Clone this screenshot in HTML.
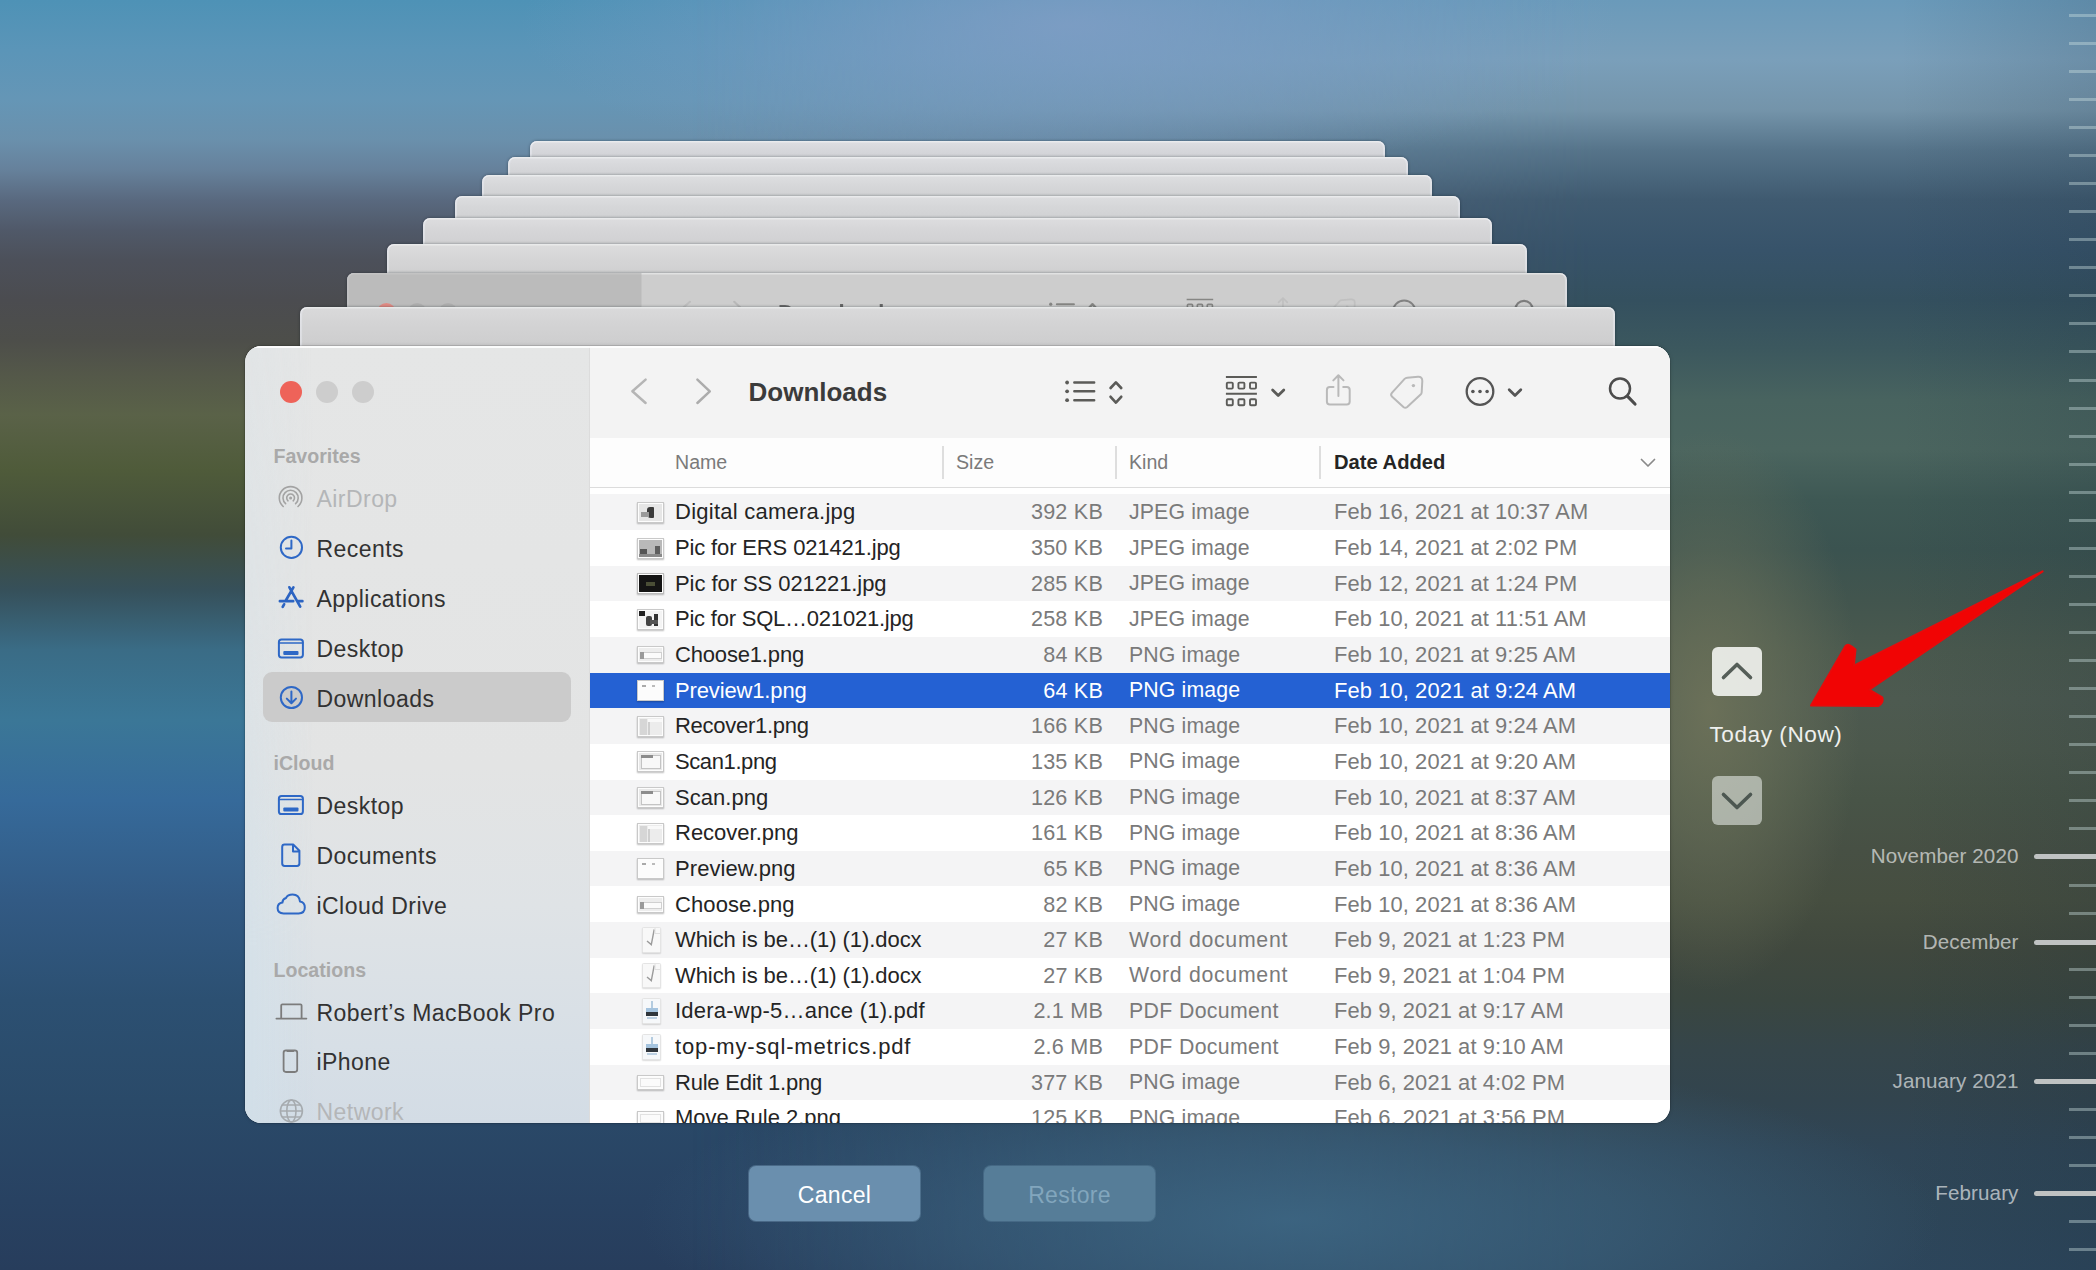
<!DOCTYPE html>
<html>
<head>
<meta charset="utf-8">
<title>Time Machine</title>
<style>
*{box-sizing:border-box;margin:0;padding:0}
html,body{width:2096px;height:1270px;overflow:hidden;background:#2b4a68}
body{font-family:"Liberation Sans",sans-serif;position:relative;color:#262626}
.abs{position:absolute}
/* ---------- background ---------- */
#bg{position:absolute;left:0;top:0;width:2096px;height:1270px;overflow:hidden}
#bgL{position:absolute;inset:0;background:linear-gradient(to bottom,
 #4e92b6 0px,#5b95b8 50px,#6596b6 100px,#6a90ac 140px,#66819b 170px,#59697f 200px,#505969 230px,#4c505a 260px,#4b4c50 300px,
 #4d4e4a 340px,#545849 375px,#5a6248 415px,#4f5b3a 470px,#414c39 535px,#36505a 590px,#3a6c86 650px,#3b7797 720px,
 #366a9a 800px,#325a84 900px,#2c5072 1000px,#2a4a69 1100px,#284262 1200px,#273d5c 1270px)}
#bgR{position:absolute;inset:0;background:linear-gradient(to bottom,
 #6a9aba 0px,#7a9fba 60px,#7494aa 110px,#56748a 150px,#3f5a70 200px,#37536a 250px,#34505f 300px,#3c585e 350px,
 #48635f 400px,#4b655f 450px,#3e5854 500px,#3b5350 550px,#42554e 600px,#4a594e 650px,#4d5a50 700px,#4c584c 750px,
 #485447 800px,#475044 850px,#464e40 900px,#40483e 950px,#3a4640 1000px,#35454a 1050px,#32444e 1100px,#2f4556 1150px,
 #2e4658 1200px,#2d465c 1270px);
 -webkit-mask-image:linear-gradient(to right,transparent 33%,#000 76%);mask-image:linear-gradient(to right,transparent 33%,#000 76%)}
#bgTop{position:absolute;left:520px;top:-130px;width:1100px;height:310px;border-radius:50%;
 background:radial-gradient(closest-side,rgba(130,158,198,.8),rgba(130,158,198,0))}
#bgOl{position:absolute;left:1560px;top:430px;width:300px;height:560px;border-radius:50%;
 background:radial-gradient(closest-side,rgba(112,116,90,.85),rgba(108,114,90,.55) 45%,rgba(100,108,88,0))}
#bgBt{position:absolute;left:640px;top:1050px;width:1300px;height:340px;border-radius:50%;
 background:radial-gradient(closest-side,rgba(64,108,138,.78),rgba(62,104,134,.5) 50%,rgba(60,100,130,0))}
#bgFR{position:absolute;left:1900px;top:0;width:196px;height:1270px;
 background:linear-gradient(to right,rgba(20,40,55,0),rgba(20,40,55,.14))}
/* ---------- stack ---------- */
.ly{position:absolute;border-radius:7px 7px 0 0;background:#d2d3d5;box-shadow:inset 0 1.5px 0 rgba(255,255,255,.4),inset -2px 0 1px rgba(235,238,245,.5),inset 2px 0 1px rgba(235,238,245,.5),0 0 3px rgba(10,20,30,.45)}
/* ---------- window ---------- */
#win{position:absolute;left:245px;top:346px;width:1425px;height:777px;border-radius:16.5px;overflow:hidden;background:#fff;
 box-shadow:0 0 0 1px rgba(0,0,0,.10),0 0 4px rgba(0,0,0,.18)}
#side{position:absolute;left:0;top:0;width:344px;height:777px;
 background:linear-gradient(to bottom,#e5e6e6 0,#e3e4e4 420px,#dfe3e6 560px,#d7dfe6 700px,#d3dce5 777px)}
#sideEdge{position:absolute;left:0;top:0;width:70px;height:777px;background:linear-gradient(to right,rgba(208,224,234,.6),rgba(208,224,234,0));-webkit-mask-image:linear-gradient(to bottom,rgba(0,0,0,.25) 0,rgba(0,0,0,.5) 300px,#000 600px);mask-image:linear-gradient(to bottom,rgba(0,0,0,.25) 0,rgba(0,0,0,.5) 300px,#000 600px)}
#main{position:absolute;left:344px;top:0;width:1081px;height:777px;background:#fff;border-left:1px solid #dcdcdc}
#tb{position:absolute;left:0;top:0;width:1081px;height:93px;background:#f3f3f3;border-bottom:1px solid #dedede}
#hdr{position:absolute;left:0;top:92px;width:1081px;height:50px;background:#fdfdfd;border-bottom:1.5px solid #dcdcdc}

/* ---------- rows ---------- */
.row{position:absolute;left:0;width:1080px;height:35.65px;font-size:22px;line-height:35.65px;white-space:nowrap}
.row.g{background:#f4f4f5}
.row.sel{background:#2461d3;color:#fff}
.row .n{position:absolute;left:85px;top:0;letter-spacing:.2px;color:#242424}
.row .s{position:absolute;right:567px;top:0;color:#7a7a7a;font-size:21.6px;letter-spacing:.2px}
.row .k{position:absolute;left:539px;top:.6px;color:#7a7a7a;font-size:21.3px;letter-spacing:.12px}
.row .d{position:absolute;left:744px;top:0;color:#7a7a7a;font-size:21.9px;letter-spacing:.1px}
.row.sel .n,.row.sel .s,.row.sel .k,.row.sel .d{color:#fff}
.ic{position:absolute;left:47px;top:7.5px;width:27px;height:21px;border:1px solid #c9c9c9;background:#f2f2f2;box-shadow:0 1px 1.5px rgba(0,0,0,.25);overflow:hidden}
.ic i{position:absolute;display:block}
.ic:after{content:"";position:absolute;inset:0;border:1.6px solid #fdfdfd}
.ic.doc:after{display:none}
.ic.w{top:9.5px;height:17px}
.ic.t{top:10.5px;height:15px}
.ic.doc{left:51.5px;top:5px;width:19.5px;height:25.5px;border:1px solid #e4e4e4;border-radius:1.5px;background:#f8f8f8;box-shadow:0 1px 1.5px rgba(0,0,0,.14)}
/* header */
#hdr span{position:absolute;top:0;line-height:48px;font-size:19.6px;color:#7a7a7a;white-space:nowrap}
#hdr b{position:absolute;top:0;line-height:48px;font-size:20.2px;color:#242424;white-space:nowrap}
#hdr i{position:absolute;top:8px;width:1.5px;height:33px;background:#dedede}

/* ---------- toolbar ---------- */
#tb svg{position:absolute;left:0;top:0}
#ttl{position:absolute;left:158.5px;top:25px;line-height:42px;font-size:26px;font-weight:bold;color:#3b3b3b;white-space:nowrap}
/* ---------- sidebar ---------- */
.tl{position:absolute;top:35px;width:22px;height:22px;border-radius:50%}
.sh{position:absolute;left:28.5px;font-size:19.6px;font-weight:bold;color:#a9a9a9;line-height:24px;white-space:nowrap}
.si{position:absolute;left:71.5px;margin-top:1px;font-size:23px;letter-spacing:.45px;color:#323232;line-height:30px;white-space:nowrap}
.si.dim{color:#b4b6b8}
#pill{position:absolute;left:17.5px;top:326px;width:308.5px;height:49.5px;border-radius:9px;background:#cbcbcb}
#side svg{position:absolute;left:0;top:0}

/* ---------- right side ---------- */
.nb{position:absolute;left:1712px;width:50px;height:49px;border-radius:6px}
#today{position:absolute;left:1709.5px;top:719.5px;font-size:22.6px;letter-spacing:.55px;line-height:30px;color:#eef0ee;white-space:nowrap}
.tk{position:absolute;left:2069px;width:27px;height:3px;background:rgba(205,225,225,.4)}
.mk{position:absolute;left:2033.5px;width:62.5px;height:5px;background:#bfc2c2;border-radius:2.5px 0 0 2.5px}
.ml{position:absolute;right:77.5px;margin-top:.5px;font-size:20.6px;line-height:26px;color:rgba(255,255,255,.62);white-space:nowrap;letter-spacing:.1px}
/* ---------- buttons ---------- */
.btn{position:absolute;top:1166px;width:171px;height:55px;border-radius:7px;text-align:center;line-height:58px;font-size:23px;white-space:nowrap;letter-spacing:.3px}
</style>
</head>
<body>
<div id="bg">
  <div id="bgL"></div>
  <div id="bgR"></div>
  <div id="bgTop"></div>
  <div id="bgOl"></div>
  <div id="bgBt"></div>
  <div id="bgFR"></div>
</div>
<div class="ly" style="background:linear-gradient(to bottom,#dedfe3 0,#d7d8dc 7.2px,#d1d2d6 16.0px);left:530px;top:141px;width:855px;height:28px"></div>
<div class="ly" style="background:linear-gradient(to bottom,#dedfe2 0,#d7d8db 8.1px,#d1d2d5 18.0px);left:508px;top:157px;width:900px;height:30px"></div>
<div class="ly" style="background:linear-gradient(to bottom,#dedfe1 0,#d7d8da 9.2px,#d1d2d4 20.5px);left:482px;top:175px;width:950px;height:32.5px"></div>
<div class="ly" style="background:linear-gradient(to bottom,#dddee0 0,#d6d7d9 10.1px,#d0d1d3 22.5px);left:455px;top:195.5px;width:1005px;height:34.5px"></div>
<div class="ly" style="background:linear-gradient(to bottom,#dddddf 0,#d6d6d8 11.7px,#d0d0d2 26.0px);left:423px;top:218px;width:1069px;height:38px"></div>
<div class="ly" style="background:linear-gradient(to bottom,#ddddde 0,#d6d6d7 13.1px,#d0d0d1 29.0px);left:387px;top:244px;width:1140px;height:41px"></div>
<div class="ly" id="ly7" style="overflow:hidden;background:#cdcdcd;left:347px;top:273px;width:1220px;height:45.5px"><div style="position:absolute;left:0;top:0;width:1425px;height:60px;transform:scale(.856);transform-origin:0 0;opacity:.62">
<div style="position:absolute;left:0;top:0;width:344px;height:60px;background:#b0b0b0"></div>
<div class="tl" style="left:35px;background:#ee6359"></div><div class="tl" style="left:70.5px;background:#9c9c9c"></div><div class="tl" style="left:106.5px;background:#9c9c9c"></div>
<svg style="position:absolute;left:345px;top:0" width="1080" height="92" viewBox="590 346 1080 92" fill="none" stroke-linecap="round" stroke-linejoin="round"><use href="#tbg"/></svg>
<div style="position:absolute;left:503.5px;top:25px;line-height:42px;font-size:26px;font-weight:bold;color:#2b2b2b;white-space:nowrap">Downloads</div>
</div></div>
<div class="ly" style="background:linear-gradient(to bottom,#dadadb 0,#d3d3d4 17.8px,#cdcdce 39.5px);left:300px;top:306.5px;width:1315px;height:51.5px"></div>
<!--STACK-->
<div id="win"><div style="position:absolute;left:0;top:0;width:1425px;height:2px;background:rgba(255,255,255,.85);z-index:5"></div>
  <div id="side"><div id="sideEdge"></div>
<div class="tl" style="left:35px;background:#ee6359"></div><div class="tl" style="left:70.5px;background:#cdcdcd"></div><div class="tl" style="left:106.5px;background:#cdcdcd"></div>
<div id="pill"></div>
<svg width="344" height="777" viewBox="245 346 344 777" fill="none" stroke-linecap="round" stroke-linejoin="round">
<!-- airdrop -->
<g stroke="#a3a3a3" stroke-width="1.6">
 <path d="M283.2 506.5 A11.3 11.3 0 1 1 298 506.5"/>
 <path d="M285.6 503.6 A7.6 7.6 0 1 1 295.6 503.6"/>
 <path d="M288 500.8 A3.9 3.9 0 1 1 293.2 500.8"/>
</g>
<circle cx="290.6" cy="498" r="1.5" fill="#a3a3a3"/>
<!-- recents -->
<circle cx="291.4" cy="547.4" r="10.6" stroke="#2e68c6" stroke-width="2"/>
<path d="M291.4 540.6 V548.4 H286" stroke="#2e68c6" stroke-width="2"/>
<!-- applications -->
<path d="M293.4 587.3 L285.5 601 M284.1 604.3 L282.7 606.8 M289.4 587.3 L300.2 606.6 M279.9 601.2 H293.2 M297.8 601.2 H302.4" stroke="#2c64c2" stroke-width="2.7"/>
<!-- desktop (fav) -->
<rect x="278.9" y="639.4" width="24" height="18" rx="2.6" stroke="#2e68c6" stroke-width="2"/>
<path d="M279 643 H302.8" stroke="#2e68c6" stroke-width="1.5"/>
<rect x="283.3" y="651" width="15.2" height="4" rx="1" fill="#2e68c6"/>
<!-- downloads -->
<circle cx="291.4" cy="697.5" r="10.6" stroke="#2e68c6" stroke-width="2"/>
<path d="M291.4 691.6 V702.6 M286.8 698.6 L291.4 703.2 L296 698.6" stroke="#2e68c6" stroke-width="2"/>
<!-- desktop (icloud) -->
<rect x="278.9" y="796" width="24" height="18" rx="2.6" stroke="#2e68c6" stroke-width="2"/>
<path d="M279 799.6 H302.8" stroke="#2e68c6" stroke-width="1.5"/>
<rect x="283.3" y="807.6" width="15.2" height="4" rx="1" fill="#2e68c6"/>
<!-- documents -->
<path d="M284.6 844.6 H293.4 L299.4 850.8 V863.6 Q299.4 866 297 866 H284.6 Q282.2 866 282.2 863.6 V847 Q282.2 844.6 284.6 844.6 Z M293 845 V851.4 H299" stroke="#2e68c6" stroke-width="2"/>
<!-- icloud drive -->
<path d="M283.6 913.4 Q277.6 913.4 277.6 908 Q277.6 903.4 282.4 902.6 Q282.6 899 286 898 Q287.6 894.6 292.6 894.6 Q299.2 894.6 300 901.6 Q304.8 902.4 304.8 907.6 Q304.8 913.4 298.6 913.4 Z" stroke="#2e68c6" stroke-width="2"/>
<!-- macbook -->
<path d="M281.2 1018 V1005.6 Q281.2 1004.4 282.4 1004.4 H300.4 Q301.6 1004.4 301.6 1005.6 V1018 M276.4 1018.6 H306.4" stroke="#7c7c7c" stroke-width="1.8"/>
<!-- iphone -->
<rect x="283.6" y="1050.4" width="13.6" height="21.6" rx="2.4" stroke="#7c7c7c" stroke-width="1.8"/>
<path d="M287.4 1051 H293.4" stroke="#7c7c7c" stroke-width="2.2"/>
<!-- network -->
<g stroke="#a6abaf" stroke-width="1.6">
 <circle cx="291.4" cy="1111" r="11"/>
 <ellipse cx="291.4" cy="1111" rx="4.6" ry="11"/>
 <path d="M280.6 1111 H302.2 M282.4 1105 H300.4 M282.4 1117 H300.4"/>
</g>
</svg>
<div class="sh" style="top:98px">Favorites</div>
<div class="si dim" style="top:137px">AirDrop</div>
<div class="si" style="top:187px">Recents</div>
<div class="si" style="top:237px">Applications</div>
<div class="si" style="top:287px">Desktop</div>
<div class="si" style="top:336.5px">Downloads</div>
<div class="sh" style="top:405px">iCloud</div>
<div class="si" style="top:444px">Desktop</div>
<div class="si" style="top:494px">Documents</div>
<div class="si" style="top:544px">iCloud Drive</div>
<div class="sh" style="top:612px">Locations</div>
<div class="si" style="top:651px">Robert’s MacBook Pro</div>
<div class="si" style="top:700px">iPhone</div>
<div class="si dim" style="top:750px">Network</div>

  </div>
  <div id="main">
    <div id="tb">
<svg width="1080" height="92" viewBox="590 346 1080 92" fill="none" stroke-linecap="round" stroke-linejoin="round"><g id="tbg">
<path d="M645.6 379.6 L632.4 391.3 L645.6 403" stroke="#b5b5b5" stroke-width="2.5"/>
<path d="M697.4 379.6 L709.8 391.3 L697.4 403" stroke="#acacac" stroke-width="2.5"/>
<g stroke="#5b5b58" stroke-width="2.4">
 <path d="M1074.3 382.5 H1094.2 M1074.3 391.3 H1094.2 M1074.3 400.2 H1094.2"/>
 <path d="M1110.6 388 L1115.9 382.4 L1121.2 388 M1110.6 396.8 L1115.9 402.6 L1121.2 396.8" stroke-width="2.7"/>
</g>
<g fill="#5b5b58" stroke="none"><circle cx="1067.1" cy="382.5" r="1.9"/><circle cx="1067.1" cy="391.3" r="1.9"/><circle cx="1067.1" cy="400.2" r="1.9"/></g>
<g stroke="#5b5b58" stroke-width="1.9" stroke-linecap="butt">
 <path d="M1225.9 377 H1256.9 M1225.9 393.7 H1256.9"/>
 <rect x="1226.8" y="382.6" width="6" height="6" rx="1"/><rect x="1238.4" y="382.6" width="6" height="6" rx="1"/><rect x="1250" y="382.6" width="6" height="6" rx="1"/>
 <rect x="1226.8" y="399.3" width="6" height="6" rx="1"/><rect x="1238.4" y="399.3" width="6" height="6" rx="1"/><rect x="1250" y="399.3" width="6" height="6" rx="1"/>
</g>
<path d="M1272.6 390 L1278.2 395.6 L1283.8 390" stroke="#5b5b58" stroke-width="2.8"/>
<g stroke="#b9b9b9" stroke-width="2">
 <path d="M1333.5 387 H1329.8 Q1326.9 387 1326.9 389.9 V401.5 Q1326.9 404.4 1329.8 404.4 H1346.8 Q1349.7 404.4 1349.7 401.5 V389.9 Q1349.7 387 1346.8 387 H1343.2"/>
 <path d="M1338.4 396 V375.6 M1333.3 380.4 L1338.4 375.2 L1343.5 380.4"/>
 <path d="M1407.2 377.7 L1418 376.8 Q1422.4 376.6 1422.3 381 L1421.7 392.2 Q1421.6 393.6 1420.6 394.6 L1407.2 407 Q1405.3 408.6 1403.4 407 L1391.9 396.4 Q1390.3 394.6 1391.9 392.8 L1404.6 378.9 Q1405.7 377.8 1407.2 377.7 Z"/>
</g>
<circle cx="1413.4" cy="385.6" r="1.7" fill="#b9b9b9"/>
<circle cx="1480" cy="391.5" r="13.3" stroke="#555" stroke-width="2.3"/>
<g fill="#555" stroke="none"><circle cx="1472.9" cy="391.5" r="1.8"/><circle cx="1480" cy="391.5" r="1.8"/><circle cx="1487.1" cy="391.5" r="1.8"/></g>
<path d="M1509.2 389.8 L1515 395.4 L1520.8 389.8" stroke="#555" stroke-width="2.8"/>
<circle cx="1620" cy="388.5" r="10" stroke="#4c4c4c" stroke-width="2.5"/>
<path d="M1627.4 396.2 L1635 404" stroke="#4c4c4c" stroke-width="3.2"/>
</g></svg>
<div id="ttl">Downloads</div>

    </div>
    <div id="hdr">
<span style="left:85px">Name</span><i style="left:352px"></i><span style="left:366px">Size</span><i style="left:525px"></i><span style="left:539px">Kind</span><i style="left:729px"></i><b style="left:744px">Date Added</b>
<svg style="position:absolute;left:1049px;top:19px" width="18" height="12" viewBox="0 0 18 12"><path d="M2.5 2.5 L9 9 L15.5 2.5" fill="none" stroke="#8a8a8a" stroke-width="1.7" stroke-linecap="round" stroke-linejoin="round"/></svg>

    </div>
<div class="row g" style="top:148.35px"><div class="ic" style="background:#e6e6e6"><i style="left:9px;top:4px;width:7px;height:11px;background:#3a3a3a;border-radius:3px 1px 1px 4px"></i><i style="left:3px;top:9px;width:8px;height:5px;background:#9a9a9a"></i></div><span class="n" style="letter-spacing:0.25px">Digital camera.jpg</span><span class="s">392 KB</span><span class="k">JPEG image</span><span class="d">Feb 16, 2021 at 10:37 AM</span></div>
<div class="row" style="top:184.00px"><div class="ic" style="background:#b9b9b9"><i style="left:2px;top:10px;width:7px;height:7px;background:#555"></i><i style="left:17px;top:7px;width:5px;height:9px;background:#5e5e5e"></i><i style="left:0;top:15px;width:27px;height:4px;background:#8a8a8a"></i></div><span class="n" style="letter-spacing:-0.14px">Pic for ERS 021421.jpg</span><span class="s">350 KB</span><span class="k">JPEG image</span><span class="d">Feb 14, 2021 at 2:02 PM</span></div>
<div class="row g" style="top:219.65px"><div class="ic" style="background:#141414;border-color:#bbb"><i style="left:8px;top:8px;width:9px;height:4px;background:#4a4e36"></i></div><span class="n" style="letter-spacing:-0.06px">Pic for SS 021221.jpg</span><span class="s">285 KB</span><span class="k">JPEG image</span><span class="d">Feb 12, 2021 at 1:24 PM</span></div>
<div class="row" style="top:255.30px"><div class="ic" style="background:#f4f4f4"><i style="left:1px;top:1px;width:6px;height:5px;background:#222"></i><i style="left:8px;top:6px;width:6px;height:10px;background:#444;border-radius:2px"></i><i style="left:16px;top:4px;width:4px;height:12px;background:#333"></i><i style="left:12px;top:10px;width:8px;height:4px;background:#555"></i></div><span class="n" style="letter-spacing:-0.22px">Pic for SQL…021021.jpg</span><span class="s">258 KB</span><span class="k">JPEG image</span><span class="d">Feb 10, 2021 at 11:51 AM</span></div>
<div class="row g" style="top:290.95px"><div class="ic w" style="background:#ededed"><i style="left:2px;top:5px;width:22px;height:7px;background:#fbfbfb;border:1px solid #d0d0d0"></i><i style="left:2px;top:5px;width:4px;height:7px;background:#9a9a9a"></i></div><span class="n" style="letter-spacing:-0.17px">Choose1.png</span><span class="s">84 KB</span><span class="k">PNG image</span><span class="d">Feb 10, 2021 at 9:25 AM</span></div>
<div class="row sel" style="top:326.60px"><div class="ic" style="background:#fcfcfc"><i style="left:4px;top:4px;width:4px;height:2px;background:#aaa"></i><i style="left:14px;top:4px;width:3px;height:2px;background:#bbb"></i></div><span class="n" style="letter-spacing:-0.14px">Preview1.png</span><span class="s">64 KB</span><span class="k">PNG image</span><span class="d">Feb 10, 2021 at 9:24 AM</span></div>
<div class="row g" style="top:362.25px"><div class="ic" style="background:#ececec"><i style="left:2px;top:2px;width:7px;height:16px;background:#d6d6d6"></i><i style="left:10px;top:5px;width:1.5px;height:13px;background:#cfcfcf"></i><i style="left:10px;top:2px;width:14px;height:3px;background:#f9f9f9"></i></div><span class="n" style="letter-spacing:-0.28px">Recover1.png</span><span class="s">166 KB</span><span class="k">PNG image</span><span class="d">Feb 10, 2021 at 9:24 AM</span></div>
<div class="row" style="top:397.90px"><div class="ic" style="background:#e9e9e9"><i style="left:3px;top:3px;width:20px;height:14px;background:#f8f8f8;border:1px solid #c4c4c4"></i><i style="left:3px;top:3px;width:12px;height:2.5px;background:#8c8c8c"></i></div><span class="n" style="letter-spacing:-0.4px">Scan1.png</span><span class="s">135 KB</span><span class="k">PNG image</span><span class="d">Feb 10, 2021 at 9:20 AM</span></div>
<div class="row g" style="top:433.55px"><div class="ic" style="background:#e9e9e9"><i style="left:3px;top:3px;width:20px;height:14px;background:#f8f8f8;border:1px solid #c4c4c4"></i><i style="left:3px;top:3px;width:12px;height:2.5px;background:#8c8c8c"></i></div><span class="n" style="letter-spacing:0.05px">Scan.png</span><span class="s">126 KB</span><span class="k">PNG image</span><span class="d">Feb 10, 2021 at 8:37 AM</span></div>
<div class="row" style="top:469.20px"><div class="ic" style="background:#ececec"><i style="left:2px;top:2px;width:7px;height:16px;background:#d6d6d6"></i><i style="left:10px;top:5px;width:1.5px;height:13px;background:#cfcfcf"></i><i style="left:10px;top:2px;width:14px;height:3px;background:#f9f9f9"></i></div><span class="n" style="letter-spacing:0px">Recover.png</span><span class="s">161 KB</span><span class="k">PNG image</span><span class="d">Feb 10, 2021 at 8:36 AM</span></div>
<div class="row g" style="top:504.85px"><div class="ic" style="background:#fcfcfc"><i style="left:4px;top:4px;width:4px;height:2px;background:#aaa"></i><i style="left:14px;top:4px;width:3px;height:2px;background:#bbb"></i></div><span class="n" style="letter-spacing:0.07px">Preview.png</span><span class="s">65 KB</span><span class="k">PNG image</span><span class="d">Feb 10, 2021 at 8:36 AM</span></div>
<div class="row" style="top:540.50px"><div class="ic w" style="background:#ededed"><i style="left:2px;top:5px;width:22px;height:7px;background:#fbfbfb;border:1px solid #d0d0d0"></i><i style="left:2px;top:5px;width:4px;height:7px;background:#9a9a9a"></i></div><span class="n" style="letter-spacing:0.1px">Choose.png</span><span class="s">82 KB</span><span class="k">PNG image</span><span class="d">Feb 10, 2021 at 8:36 AM</span></div>
<div class="row g" style="top:576.15px"><div class="ic doc"><svg style="position:absolute;left:0;top:0" width="18" height="24" viewBox="0 0 18 24"><path d="M11.2 1.5 L8.3 16.6 L4 13" fill="none" stroke="#9c9c9c" stroke-width="1.4"/><path d="M12 0 V5.5 H17.5" fill="none" stroke="#e0e0e0" stroke-width="1"/></svg></div><span class="n" style="letter-spacing:-0.07px">Which is be…(1) (1).docx</span><span class="s">27 KB</span><span class="k" style="letter-spacing:.7px">Word document</span><span class="d">Feb 9, 2021 at 1:23 PM</span></div>
<div class="row" style="top:611.80px"><div class="ic doc"><svg style="position:absolute;left:0;top:0" width="18" height="24" viewBox="0 0 18 24"><path d="M11.2 1.5 L8.3 16.6 L4 13" fill="none" stroke="#9c9c9c" stroke-width="1.4"/><path d="M12 0 V5.5 H17.5" fill="none" stroke="#e0e0e0" stroke-width="1"/></svg></div><span class="n" style="letter-spacing:-0.07px">Which is be…(1) (1).docx</span><span class="s">27 KB</span><span class="k" style="letter-spacing:.7px">Word document</span><span class="d">Feb 9, 2021 at 1:04 PM</span></div>
<div class="row g" style="top:647.45px"><div class="ic doc" style="background:#f6f8fa"><i style="left:3.5px;top:8.5px;width:11.5px;height:5px;background:#a4c3de"></i><i style="left:3.5px;top:13px;width:11.5px;height:3.6px;background:#30363c"></i><i style="left:8px;top:2px;width:2.4px;height:7px;background:#b4cce0"></i><i style="left:4.5px;top:17.6px;width:9.5px;height:2.4px;background:#bcd0e2"></i></div><span class="n" style="letter-spacing:0.23px">Idera-wp-5…ance (1).pdf</span><span class="s">2.1 MB</span><span class="k" style="letter-spacing:.35px">PDF Document</span><span class="d">Feb 9, 2021 at 9:17 AM</span></div>
<div class="row" style="top:683.10px"><div class="ic doc" style="background:#f6f8fa"><i style="left:3.5px;top:8.5px;width:11.5px;height:5px;background:#a4c3de"></i><i style="left:3.5px;top:13px;width:11.5px;height:3.6px;background:#30363c"></i><i style="left:8px;top:2px;width:2.4px;height:7px;background:#b4cce0"></i><i style="left:4.5px;top:17.6px;width:9.5px;height:2.4px;background:#bcd0e2"></i></div><span class="n" style="letter-spacing:0.85px">top-my-sql-metrics.pdf</span><span class="s">2.6 MB</span><span class="k" style="letter-spacing:.35px">PDF Document</span><span class="d">Feb 9, 2021 at 9:10 AM</span></div>
<div class="row g" style="top:718.75px"><div class="ic t" style="background:#fbfbfb"><i style="left:2px;top:2px;width:21px;height:9px;border:1px solid #e2e2e2"></i></div><span class="n" style="letter-spacing:-0.23px">Rule Edit 1.png</span><span class="s">377 KB</span><span class="k">PNG image</span><span class="d">Feb 6, 2021 at 4:02 PM</span></div>
<div class="row" style="top:754.40px"><div class="ic t" style="background:#fbfbfb"><i style="left:2px;top:2px;width:21px;height:9px;border:1px solid #e2e2e2"></i></div><span class="n" style="letter-spacing:-0.03px">Move Rule 2.png</span><span class="s">125 KB</span><span class="k">PNG image</span><span class="d">Feb 6, 2021 at 3:56 PM</span></div>

  </div>
</div>

<div class="nb" style="top:647px;background:rgba(238,240,236,.93)"></div>
<div class="nb" style="top:775.5px;background:rgba(222,228,222,.62)"></div>
<svg class="abs" style="left:0;top:0" width="2096" height="1270" viewBox="0 0 2096 1270" fill="none">
 <path d="M1723.5 677.5 L1737 664.5 L1750.5 677.5" stroke="#555e58" stroke-width="3.6" stroke-linecap="round" stroke-linejoin="round"/>
 <path d="M1723.5 794.5 L1737 807.5 L1750.5 794.5" stroke="#4c5751" stroke-width="3.6" stroke-linecap="round" stroke-linejoin="round"/>
 <path d="M1811 705.5 L1845.5 646 Q1848.5 642.5 1855.5 649.5 L1853.8 665.6 L2042.6 571.4 L1869.2 689.6 L1882.2 697.4 Q1884 702 1878.4 706 Z" fill="#f10404" stroke="#e80a0a" stroke-width="2" stroke-linejoin="round"/>
</svg>
<div id="today">Today (Now)</div>
<div class="tk" style="top:13.7px"></div>
<div class="tk" style="top:41.8px"></div>
<div class="tk" style="top:69.8px"></div>
<div class="tk" style="top:97.9px"></div>
<div class="tk" style="top:125.9px"></div>
<div class="tk" style="top:154.0px"></div>
<div class="tk" style="top:182.1px"></div>
<div class="tk" style="top:210.1px"></div>
<div class="tk" style="top:238.2px"></div>
<div class="tk" style="top:266.2px"></div>
<div class="tk" style="top:294.3px"></div>
<div class="tk" style="top:322.4px"></div>
<div class="tk" style="top:350.4px"></div>
<div class="tk" style="top:378.5px"></div>
<div class="tk" style="top:406.5px"></div>
<div class="tk" style="top:434.6px"></div>
<div class="tk" style="top:462.7px"></div>
<div class="tk" style="top:490.7px"></div>
<div class="tk" style="top:518.8px"></div>
<div class="tk" style="top:546.8px"></div>
<div class="tk" style="top:574.9px"></div>
<div class="tk" style="top:603.0px"></div>
<div class="tk" style="top:631.0px"></div>
<div class="tk" style="top:659.1px"></div>
<div class="tk" style="top:687.1px"></div>
<div class="tk" style="top:715.2px"></div>
<div class="tk" style="top:743.3px"></div>
<div class="tk" style="top:771.3px"></div>
<div class="tk" style="top:799.4px"></div>
<div class="tk" style="top:827.4px"></div>
<div class="mk" style="top:854.0px"></div><div class="ml" style="top:842.5px">November 2020</div>
<div class="tk" style="top:883.6px"></div>
<div class="tk" style="top:911.6px"></div>
<div class="mk" style="top:939.7px"></div><div class="ml" style="top:928.2px">December</div>
<div class="tk" style="top:967.7px"></div>
<div class="tk" style="top:995.8px"></div>
<div class="tk" style="top:1023.9px"></div>
<div class="tk" style="top:1051.9px"></div>
<div class="mk" style="top:1078.8px"></div><div class="ml" style="top:1067.3px">January 2021</div>
<div class="tk" style="top:1108.0px"></div>
<div class="tk" style="top:1136.1px"></div>
<div class="tk" style="top:1164.2px"></div>
<div class="mk" style="top:1190.8px"></div><div class="ml" style="top:1179.3px">February</div>
<div class="tk" style="top:1220.3px"></div>
<div class="tk" style="top:1248.3px"></div>

<div class="btn" style="left:749px;background:#6a8fae;color:#fff;box-shadow:0 0 0 1px rgba(130,165,195,.35)">Cancel</div>
<div class="btn" style="left:984px;background:#567d98;color:#82a6bd;box-shadow:0 0 0 1px rgba(110,150,175,.3)">Restore</div>

</body>
</html>
